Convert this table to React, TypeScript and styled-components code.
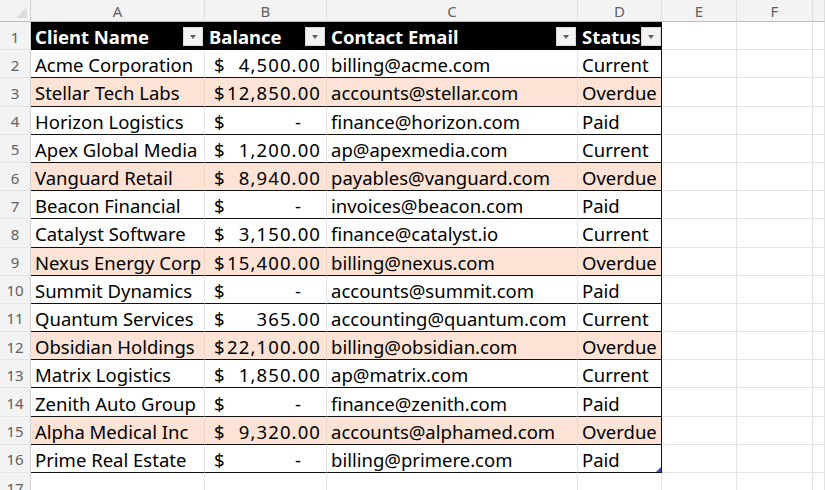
import React from "react";
import styled, { createGlobalStyle, css } from "styled-components";

const Global = createGlobalStyle`
  html, body { margin: 0; padding: 0; background: #ffffff; overflow: hidden; }
  body { font-family: "Noto Sans", "Open Sans", sans-serif; }
`;

const COLS = "31px 174px 122px 251px 84px 75px 76px 1fr";
const ROW_H = 28.19;

const Sheet = styled.div`
  width: 825px;
  height: 490px;
  overflow: hidden;
  display: flex;
  flex-direction: column;
`;

const Row = styled.div<{ $h: number }>`
  display: grid;
  grid-template-columns: ${COLS};
  height: ${(p) => p.$h}px;
  flex: none;
`;

const Corner = styled.div`
  background: #f3f3f3;
  border-right: 1px solid #d2d2d2;
  border-bottom: 1px solid #bdbdbd;
  position: relative;
  &::after {
    content: "";
    position: absolute;
    right: 3px;
    bottom: 3px;
    border-left: 11px solid transparent;
    border-bottom: 11px solid #dcdcdc;
  }
`;

const ColHead = styled.div`
  background: #f3f3f3;
  border-right: 1px solid #dedede;
  border-bottom: 1px solid #bdbdbd;
  color: #616161;
  font-size: 15px;
  display: flex;
  align-items: center;
  justify-content: center;
  padding-top: 1px;
  box-sizing: border-box;
`;

const RowHead = styled.div`
  background: #f3f3f3;
  border-right: 1px solid #d2d2d2;
  border-bottom: 1px solid #e3e3e3;
  color: #616161;
  font-size: 15px;
  display: flex;
  align-items: center;
  justify-content: center;
  padding-top: 2px;
  box-sizing: border-box;
`;

const Cell = styled.div<{ $kind: "head" | "data" | "blank"; $peach?: boolean; $edge?: boolean }>`
  box-sizing: border-box;
  display: flex;
  align-items: center;
  padding: 2px 4px 0 4px;
  font-size: 18.5px;
  white-space: nowrap;
  overflow: hidden;
  position: relative;
  color: #000;
  ${(p) =>
    p.$kind === "head" &&
    css`
      background: #000;
      color: #fff;
      font-weight: 700;
      justify-content: space-between;
      padding-right: 2px;
      border-bottom: 1px solid #000;
    `}
  ${(p) =>
    p.$kind === "data" &&
    css`
      background: ${p.$peach ? "#fce3d5" : "#ffffff"};
      border-bottom: 1.5px solid #111;
      border-right: 1px solid ${p.$peach ? "#f0d6c8" : "#e3e3e3"};
    `}
  ${(p) =>
    p.$kind === "blank" &&
    css`
      border-right: 1px solid #e3e3e3;
      border-bottom: 1px solid #e3e3e3;
    `}
  ${(p) =>
    p.$edge &&
    css`
      border-right: 1.5px solid #111;
    `}
`;

const FilterBtn = styled.span`
  width: 20px;
  height: 19px;
  background: #f3f3f3;
  border: 1px solid #d8d8d8;
  box-sizing: border-box;
  display: flex;
  align-items: center;
  justify-content: center;
  flex: none;
  margin-top: -1px;
  &::after {
    content: "";
    border-left: 3.5px solid transparent;
    border-right: 3.5px solid transparent;
    border-top: 4px solid #606060;
    margin-top: 2px;
  }
`;

const Money = styled.div`
  flex: 1;
  display: flex;
  justify-content: space-between;
  padding-left: 5px;
  padding-right: 1px;
`;

const Amount = styled.span<{ $zero?: boolean }>`
  letter-spacing: ${(p) => (p.$zero ? "0" : "1.1px")};
  padding-right: ${(p) => (p.$zero ? "20px" : "0")};
`;

const Handle = styled.span`
  position: absolute;
  right: 0;
  bottom: 0;
  border-left: 5px solid transparent;
  border-bottom: 5px solid #3c4fa8;
`;

type Rec = [string, string, string, string];

const data: Rec[] = [
  ["Acme Corporation", "4,500.00", "billing@acme.com", "Current"],
  ["Stellar Tech Labs", "12,850.00", "accounts@stellar.com", "Overdue"],
  ["Horizon Logistics", "-", "finance@horizon.com", "Paid"],
  ["Apex Global Media", "1,200.00", "ap@apexmedia.com", "Current"],
  ["Vanguard Retail", "8,940.00", "payables@vanguard.com", "Overdue"],
  ["Beacon Financial", "-", "invoices@beacon.com", "Paid"],
  ["Catalyst Software", "3,150.00", "finance@catalyst.io", "Current"],
  ["Nexus Energy Corp", "15,400.00", "billing@nexus.com", "Overdue"],
  ["Summit Dynamics", "-", "accounts@summit.com", "Paid"],
  ["Quantum Services", "365.00", "accounting@quantum.com", "Current"],
  ["Obsidian Holdings", "22,100.00", "billing@obsidian.com", "Overdue"],
  ["Matrix Logistics", "1,850.00", "ap@matrix.com", "Current"],
  ["Zenith Auto Group", "-", "finance@zenith.com", "Paid"],
  ["Alpha Medical Inc", "9,320.00", "accounts@alphamed.com", "Overdue"],
  ["Prime Real Estate", "-", "billing@primere.com", "Paid"],
];

const headers = ["Client Name", "Balance", "Contact Email", "Status"];
const letters = ["A", "B", "C", "D", "E", "F", ""];

export default function App() {
  return (
    <>
      <Global />
      <Sheet>
        <Row $h={22}>
          <Corner />
          {letters.map((l, i) => (
            <ColHead key={i}>{l}</ColHead>
          ))}
        </Row>
        <Row $h={ROW_H}>
          <RowHead>1</RowHead>
          {headers.map((h, i) => (
            <Cell key={h} $kind="head" $edge={i === 3}>
              <span>{h}</span>
              <FilterBtn />
            </Cell>
          ))}
          <Cell $kind="blank" />
          <Cell $kind="blank" />
          <Cell $kind="blank" />
        </Row>
        {data.map((r, idx) => {
          const peach = r[3] === "Overdue";
          const isLast = idx === data.length - 1;
          return (
            <Row key={idx} $h={ROW_H}>
              <RowHead>{idx + 2}</RowHead>
              <Cell $kind="data" $peach={peach}>{r[0]}</Cell>
              <Cell $kind="data" $peach={peach}>
                <Money>
                  <span>$</span>
                  <Amount $zero={r[1] === "-"}>{r[1]}</Amount>
                </Money>
              </Cell>
              <Cell $kind="data" $peach={peach}>{r[2]}</Cell>
              <Cell $kind="data" $peach={peach} $edge>
                {r[3]}
                {isLast && <Handle />}
              </Cell>
              <Cell $kind="blank" />
              <Cell $kind="blank" />
              <Cell $kind="blank" />
            </Row>
          );
        })}
        <Row $h={ROW_H}>
          <RowHead>17</RowHead>
          {[0, 1, 2, 3, 4, 5, 6].map((i) => (
            <Cell key={i} $kind="blank" />
          ))}
        </Row>
      </Sheet>
    </>
  );
}
